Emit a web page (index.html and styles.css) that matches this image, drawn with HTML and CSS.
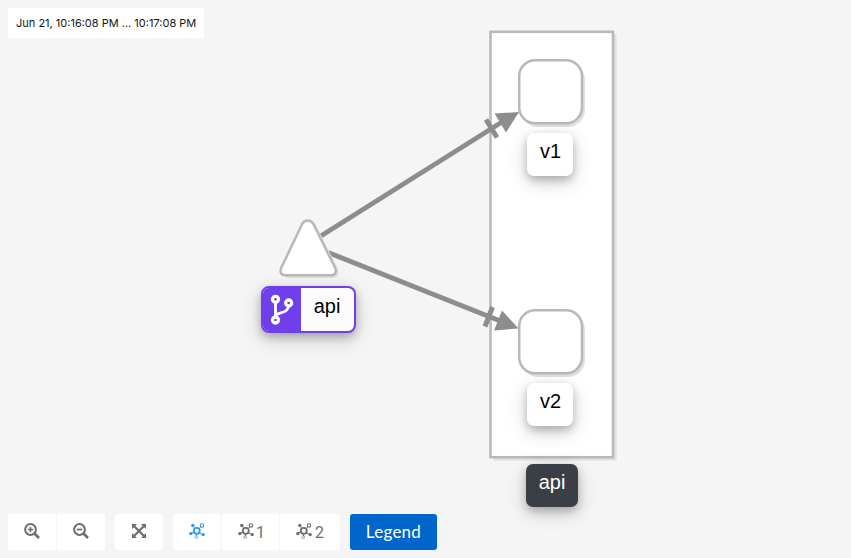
FILE: index.html
```html
<!DOCTYPE html>
<html lang="en">
<head>
<meta charset="utf-8">
<title>Graph</title>
<link rel="stylesheet" href="styles.css">
</head>
<body>
<svg class="defs" aria-hidden="true">
  <symbol id="topology" viewBox="0 0 16 16">
    <g fill="none" stroke="currentColor">
      <circle cx="7.8" cy="7.8" r="3" stroke-width="1.8"/>
      <circle cx="13" cy="2.5" r="1.7" stroke-width="1.1"/>
      <circle cx="7.2" cy="14" r="1.3" stroke-width="1.1" opacity=".6"/>
      <path d="M4 3l2 2.5M10 5.700l2-2M5 9l-3 1M10 9.500l3.300 2M7.600 11l-.2 2" stroke-width="1"/>
    </g>
    <g fill="currentColor"><circle cx="3.800" cy="2.400" r="1.700"/><circle cx="1.800" cy="10.600" r="1.700"/><circle cx="14.200" cy="11.600" r="1.700"/></g>
  </symbol>
</svg>
<main class="page">
  <svg class="graph" width="851" height="558">
    <rect class="shade" x="493.5" y="34.5" width="123" height="426"/>
    <rect class="shape" x="490.5" y="31.8" width="122.5" height="425.4"/>
    <rect class="shade" x="521" y="63" width="64" height="64" rx="17"/>
    <rect class="shape" x="519.2" y="60.3" width="62.8" height="63" rx="16"/>
    <rect class="shade" x="521" y="313" width="64" height="64" rx="17"/>
    <rect class="shape" x="519.2" y="310.3" width="62.8" height="63" rx="16"/>
    <path class="edge" d="M320 236.5L502 122M328 252.5L499 320.5M486 119.5L497 137.5M492.5 307L485 326.5"/>
    <path class="arrow" d="M519 112L494.500 113.500L506 132.500ZM518.500 328.500L502 310.500L494 330.500Z"/>
    <path class="shade" d="M304.500 226C307 221 314 221 316.500 226L338 269C340 274 338 278 333 278H289C284 278 281 274 283 269Z"/>
    <path class="shape" d="M302.300 223.800C304.500 219.500 311 219.500 313.300 223.800L335 267.500C337 272 335 275.300 331 275.300H285C281 275.300 279.400 272 281.400 267.500Z"/>
  </svg>
  <div class="label v1">v1</div>
  <div class="label v2">v2</div>
  <div class="label app">api</div>
  <div class="label service">
    <span class="badge"><svg width="26" height="32" viewBox="0 0 26 32" fill="none" stroke="#fff" stroke-width="3.300">
      <circle cx="5.500" cy="6.300" r="3"/><circle cx="18.700" cy="10" r="3"/><circle cx="5.500" cy="27" r="3"/><path stroke-width="2.800" d="M5.500 9V24M18.500 13C18 20.500 9 19 6 22"/>
    </svg></span>
    <span class="name">api</span>
  </div>
  <header class="time">Jun 21, 10:16:08 PM ... 10:17:08 PM</header>
  <footer class="toolbar">
    <div class="group">
      <button class="zoom"><svg width="16" height="16" viewBox="0 0 16 16" fill="none" stroke="currentColor"><circle cx="6.500" cy="6.500" r="5.400" stroke-width="2"/><path d="M10.500 10.500L15 15" stroke-width="2.700"/><path d="M3.700 6.500H9.300M6.500 3.700V9.300" stroke-width="1.500"/></svg></button>
      <button class="zoom"><svg width="16" height="16" viewBox="0 0 16 16" fill="none" stroke="currentColor"><circle cx="6.500" cy="6.500" r="5.400" stroke-width="2"/><path d="M10.500 10.500L15 15" stroke-width="2.700"/><path d="M3.700 6.500H9.300" stroke-width="1.700"/></svg></button>
    </div>
    <div class="group">
      <button class="fit"><svg width="14" height="14" viewBox="0 0 14 14"><path d="M2 2L12 12M12 2L2 12" stroke="currentColor" stroke-width="2.200"/><path fill="currentColor" d="M0 0H5L0 5ZM9 0H14V5ZM0 9V14H5ZM14 9V14H9Z"/></svg></button>
    </div>
    <div class="group">
      <button class="layout active"><svg width="16" height="16"><use href="#topology"/></svg></button>
      <button class="layout one"><svg width="16" height="16"><use href="#topology"/></svg><span>1</span></button>
      <button class="layout two"><svg width="16" height="16"><use href="#topology"/></svg><span>2</span></button>
    </div>
    <button class="legend">Legend</button>
  </footer>
</main>
</body>
</html>
```
FILE: styles.css
```css
* { box-sizing: border-box; }
body { margin: 0; background: #f5f5f5; font-family: Lato, "Liberation Sans", sans-serif; overflow: hidden; }
.defs { position: absolute; width: 0; height: 0; }
.page { position: relative; height: 558px; padding: 8px; display: flex; flex-direction: column; justify-content: space-between; align-items: flex-start; }
.graph { position: absolute; left: 0; top: 0; }
.shape { fill: #fff; stroke: #b8b8b8; stroke-width: 2.5; }
.shade { fill: #e0e0e0; }
.edge { fill: none; stroke: #8b8d8f; stroke-width: 5; }
.arrow { fill: #8b8d8f; }
.label { position: absolute; display: flex; justify-content: center; font: 20px/36px "Liberation Sans", Arial, sans-serif; color: #000; background: #fff; border-radius: 7px; box-shadow: 0 4px 8px rgba(3,3,3,.22), 0 6px 20px rgba(3,3,3,.18); }
.v1, .v2 { left: 527px; width: 46px; height: 43px; padding-left: 1px; }
.v1 { top: 133px; }
.v2 { top: 383px; }
.app { left: 526px; top: 464px; width: 52px; height: 43px; color: #fff; background: #393f44; }
.service { left: 261px; top: 286px; width: 95px; height: 47px; border: 2px solid #703fec; border-radius: 8px; background: #fcfcfc; overflow: hidden; }
.badge { width: 38px; height: 43px; background: #703fec; padding: 5px 0 0 7px; line-height: 0; }
.name { flex: 1; text-align: center; padding-right: 1px; }
.time { position: relative; width: 196px; height: 30px; padding-left: 8px; background: #fff; border-radius: 3px; font: 11px/30px Inter, sans-serif; white-space: nowrap; color: #151515; }
.toolbar { position: relative; display: flex; gap: 10px; height: 36px; }
.group { display: flex; gap: 1px; }
button { display: flex; align-items: center; justify-content: center; height: 36px; padding: 0 0 2px; border: 0; border-radius: 3px; background: #fff; color: #6a6e73; font: 16px Lato, sans-serif; }
.zoom, .fit { width: 48px; }
.layout { width: 48px; gap: 3px; color: #6a6e73; }
.one { width: 57px; }
.two { width: 60px; }
.layout span { font: 16px Roboto, sans-serif; transform: translateY(1px); }
.layout.active { color: #2b9af3; }
.one, .two { justify-content: flex-start; padding-left: 16px; }
.one span { margin-left: -1px; }
.legend { width: 87px; background: #06c; color: #fff; font-size: 17px; letter-spacing: .25px; padding-bottom: 1px; }
```
